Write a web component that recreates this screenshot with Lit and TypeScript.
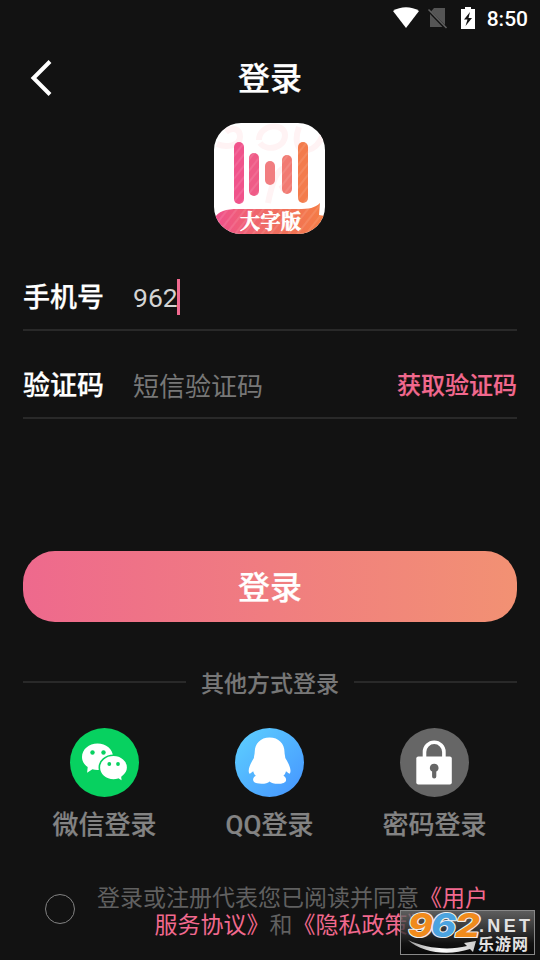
import { LitElement, html, css, svg } from "lit";
import { customElement, property } from "lit/decorators.js";

const wechat = svg`
  <circle cx="34.5" cy="34.5" r="34.5" fill="#07d160"/>
  <path fill="#fff" d="M27.500 15.500c-8.600 0-15.500 5.900-15.500 13.400 0 4.200 2.200 7.700 5.700 10.100l-.6 5.700 5.300-3.400c1.600.5 3.300.8 5.100.8 8.600 0 15.500-5.900 15.500-13.300s-6.900-13.300-15.500-13.300z"/>
  <circle cx="22.500" cy="24.500" r="2.200" fill="#07d160"/><circle cx="33.500" cy="24.500" r="2.200" fill="#07d160"/>
  <path fill="#fff" stroke="#07d160" stroke-width="1.600" d="M43.500 27.300c-8 0-14.200 5.500-14.200 12.300s6.200 12.400 14.200 12.400c1.700 0 3.300-.3 4.800-.8l4.300 2.700-.6-4.800c3.300-2.300 5.700-5.600 5.700-9.500 0-6.800-6.300-12.300-14.200-12.300z"/>
  <circle cx="39.300" cy="36" r="1.900" fill="#07d160"/><circle cx="48" cy="36" r="1.900" fill="#07d160"/>`;

const qq = svg`
  <defs><linearGradient id="q" x1="0.100" y1="0.100" x2="0.900" y2="0.900"><stop stop-color="#5bcbff"/><stop offset="1" stop-color="#489aff"/></linearGradient></defs>
  <circle cx="34.500" cy="34.500" r="34.500" fill="url(#q)"/>
  <path fill="#fff" d="M34.500 9.500c-9 0-14.800 6.300-14.800 14.500 0 2-.6 3.500-.8 6-2.800 4.500-5 9-5.200 12.500 0 3 .9 3.700 1.900 2.700l2.600-1.900c.6 2.500 1.400 3.400 2.600 4.500-1.800.9-2.700 2.300-2.700 3.900 0 3 3.800 4.100 8.400 4.100 3.600 0 6.700-1.100 8.100-2.400 1.500 1.300 4.600 2.400 8.200 2.400 4.600 0 8.300-1.100 8.300-4.100 0-1.600-.9-3-2.700-3.900 1.200-1.100 2-2 2.600-4.500l2.600 1.900c1 1 1.900.3 1.900-2.700-.2-3.500-2.400-8-5.200-12.500-.2-2.500-.8-4-.8-6 0-8.200-5.800-14.500-15-14.500z"/>`;

const lock = svg`
  <circle cx="34.500" cy="34.500" r="34.500" fill="#666"/>
  <path d="M24.500 30v-6a9.700 9.700 0 0 1 19.400 0V30" fill="none" stroke="#fff" stroke-width="3.600"/>
  <rect x="16.300" y="28.500" width="35.500" height="28" rx="2" fill="#fff"/>
  <path fill="#666" d="M34.200 35.700a4.200 4.200 0 0 0-2.100 7.900V48.500a2.100 2.100 0 0 0 4.200 0v-4.900a4.200 4.200 0 0 0-2.100-7.900z"/>`;

@customElement("login-method")
export class LoginMethod extends LitElement {
  @property() label = "";
  @property({ attribute: false }) icon: unknown;
  static styles = css`
    :host { display: flex; flex-direction: column; align-items: center; width: 165px; }
    svg { display: block; width: 69px; height: 69px; }
    .label { margin-top: 10px; font-size: 26px; line-height: 36px; font-weight: 500; color: #838383; white-space: nowrap; -webkit-text-stroke: .2px #838383; }
  `;
  render() {
    return html`<svg viewBox="0 0 69 69">${this.icon}</svg><span class="label">${this.label}</span>`;
  }
}

@customElement("app-root")
export class AppRoot extends LitElement {
  static styles = css`
    :host { display: block; position: relative; width: 540px; height: 960px; overflow: hidden; background: #121212; color: #fff; font-family: Roboto, "Noto Sans CJK SC", sans-serif; }
    * { box-sizing: border-box; }
    svg { display: block; }
    .status { height: 36px; padding-right: 12px; display: flex; justify-content: flex-end; align-items: center; }
    .battery { margin: 0 12px 0 13px; }
    .time { font-size: 21px; line-height: 36px; font-weight: 500; padding-top: 1px; }
    .header { height: 80px; display: grid; grid-template-columns: 100px 1fr 100px; align-items: center; }
    .back { margin: 1px 0 0 30px; }
    .title { text-align: center; font-size: 32px; line-height: 44px; font-weight: 500; padding-top: 5px; -webkit-text-stroke: .25px; }
    .logo { width: 111px; height: 111px; margin: 7px auto 0 214px; }
    .form { margin: 30px 23px 0; }
    .row { height: 67px; display: flex; align-items: center; border-bottom: 2px solid #292929; }
    .row + .row { margin-top: 21px; }
    .name { width: 110px; font-size: 27px; font-weight: 500; line-height: 36px; padding-top: 2px; -webkit-text-stroke: .25px; }
    .value { font-size: 26.500px; line-height: 36px; padding-top: 2px; color: #d4d4d4; }
    .hint { flex: 1; font-size: 26px; line-height: 36px; padding-top: 4px; color: #777; }
    .cursor { width: 3px; height: 36px; background: #f0698f; margin-left: -1px; }
    .code { font-size: 24px; line-height: 36px; font-weight: 500; padding-top: 3px; color: #f1698e; -webkit-text-stroke: .2px; }
    .submit { display: flex; align-items: center; justify-content: center; width: 494px; height: 71px; margin: 132px 23px 0; padding: 3px 0 0; border: 0; border-radius: 32px; background: linear-gradient(90deg, #ee698d, #f29173); color: #fff; font: 500 32px/44px Roboto, "Noto Sans CJK SC", sans-serif; -webkit-text-stroke: .25px; }
    .divider { margin: 43px 23px 0; height: 34px; display: flex; align-items: center; gap: 15px; color: #777; font-size: 23px; line-height: 34px; font-weight: 500; }
    .caption { padding-top: 5px; -webkit-text-stroke: .1px; }
    .rule { flex: 1; height: 2px; background: #292929; }
    .methods { margin-top: 29px; padding: 0 22px; display: flex; }
    .agreement { display: flex; margin: 42px 0 0 45px; }
    .check { width: 30px; height: 30px; margin-top: 9px; border: 1px solid #828282; border-radius: 50%; }
    .terms { width: 391px; margin-left: 22px; text-align: center; font-size: 23px; line-height: 27px; color: #606060; white-space: nowrap; }
    .link { color: #f1698e; }
    .badge { position: absolute; left: 400px; top: 910px; }
    .cjk { font-family: "Noto Sans CJK SC", sans-serif; }
    .edition { font-family: "Noto Serif CJK SC", "Noto Sans CJK SC", serif; font-weight: 700; stroke: #fff; stroke-width: .7px; }
    .num { font-family: Inter, "Liberation Sans", sans-serif; font-weight: 800; font-style: italic; }
    .net { font-family: "Liberation Sans", sans-serif; font-weight: 700; }
  `;

  render() {
    return html`
      <div class="status">
        <svg width="55" height="24" viewBox="0 0 55 24">
          <path fill="#fff" d="M0 5C7.500 0 18.500 0 26 5L13 22z"/>
          <path fill="#555" d="M41 2h11v17L38 5.500zM37 8 49.500 21H37z"/>
          <path d="M35.500 3.500 53.500 22" stroke="#606060" stroke-width="1.500"/>
        </svg>
        <svg class="battery" width="14" height="22" viewBox="0 0 14 22">
          <path fill="#fff" d="M4 0h6v2h4v20H0V2h4z"/>
          <path fill="#121212" d="M9 5 3 12.500h3.500L4.500 19 11 11H7.500z"/>
        </svg>
        <span class="time">8:50</span>
      </div>
      <div class="header">
        <svg class="back" width="24" height="38" viewBox="0 0 24 38"><path d="M20 3.500 3.500 20 20 36.500" fill="none" stroke="#fff" stroke-width="4"/></svg>
        <div class="title">登录</div>
      </div>
      <svg class="logo" viewBox="0 0 111 111">
        <defs>
          <linearGradient id="band"><stop stop-color="#f0508d"/><stop offset=".5" stop-color="#ef6c63"/><stop offset="1" stop-color="#f57d43"/></linearGradient>
          <pattern id="hatch" width="7" height="9" patternUnits="userSpaceOnUse" patternTransform="rotate(38)"><rect width="2" height="9" fill="#fff" opacity=".1"/></pattern>
          <clipPath id="tile"><rect width="111" height="111" rx="27"/></clipPath>
        </defs>
        <g clip-path="url(#tile)">
          <rect width="111" height="111" fill="#fff"/>
          <g fill="none" stroke="#fff3f4" stroke-width="6">
            <path d="M3 21c9 4 23 2 23-7S18 4 12 9M45 17c0-16 26-18 26-5S53 29 46 20M85 4c-5 14-2 25 9 23 7-1 12-8 15-15M54 80c3-15 7-30 14-34 9-3 7 15-2 20"/>
          </g>
          <rect x="20" y="19" width="10" height="62" rx="5" fill="#f0538b"/>
          <rect x="35" y="30" width="10" height="43" rx="5" fill="#ef5b87"/>
          <rect x="51" y="38" width="10" height="24" rx="5" fill="#f17d80"/>
          <rect x="68" y="32" width="10" height="39" rx="5" fill="#f17a72"/>
          <rect x="84" y="19" width="10" height="61" rx="5" fill="#f37c4c"/>
          <path fill="url(#hatch)" d="M20 24a5 5 0 0 1 10 0v52a5 5 0 0 1-10 0zM35 35a5 5 0 0 1 10 0v33a5 5 0 0 1-10 0zM68 37a5 5 0 0 1 10 0v29a5 5 0 0 1-10 0zM84 24a5 5 0 0 1 10 0v51a5 5 0 0 1-10 0z"/>
          <path fill="url(#band)" d="M0 96C4 88 12 86 24 86h60c11 0 17-1 22-6l-1 12 6 1v18H0z"/>
          <path fill="url(#hatch)" d="M0 96C4 88 12 86 24 86h60c11 0 17-1 22-6l-1 12 6 1v18H0z"/>
          <text class="edition" x="26" y="105.500" font-size="20" textLength="61" fill="#fff">大字版</text>
        </g>
      </svg>
      <div class="form">
        <div class="row"><span class="name">手机号</span><span class="value">962</span><span class="cursor"></span></div>
        <div class="row"><span class="name">验证码</span><span class="hint">短信验证码</span><span class="code">获取验证码</span></div>
      </div>
      <button class="submit">登录</button>
      <div class="divider"><span class="rule"></span><span class="caption">其他方式登录</span><span class="rule"></span></div>
      <div class="methods">
        <login-method label="微信登录" .icon=${wechat}></login-method>
        <login-method label="QQ登录" .icon=${qq}></login-method>
        <login-method label="密码登录" .icon=${lock}></login-method>
      </div>
      <div class="agreement">
        <span class="check"></span>
        <div class="terms">登录或注册代表您已阅读并同意<span class="link">《用户<br>服务协议》</span>和<span class="link">《隐私政策》</span></div>
      </div>
      <svg class="badge" width="135" height="45" viewBox="0 0 135 45">
        <defs>
          <linearGradient id="shade" x2="0" y2="1"><stop stop-color="#777" stop-opacity=".75"/><stop offset=".75" stop-color="#111" stop-opacity=".85"/><stop offset="1" stop-color="#080808"/></linearGradient>
          <linearGradient id="swoosh"><stop stop-color="#999"/><stop offset=".5" stop-color="#fff"/><stop offset="1" stop-color="#ccc"/></linearGradient>
        </defs>
        <rect x=".5" y=".5" width="134" height="44" fill="url(#shade)" stroke="#888"/>
        <path fill="url(#swoosh)" d="M8 30C25 38 48 41 67 36l-3-3 12-2-3 11-3-3C49 46 22 43 8 30z"/>
        <g class="num" font-size="32.500" stroke="#eee" stroke-width="2.200" paint-order="stroke" stroke-linejoin="round">
          <text x="8" y="27" textLength="25" lengthAdjust="spacingAndGlyphs" fill="#f08b1d">9</text>
          <text x="31" y="27" textLength="25" lengthAdjust="spacingAndGlyphs" fill="#4ba3df">6</text>
          <text x="55" y="27" textLength="25" lengthAdjust="spacingAndGlyphs" fill="#f08b1d">2</text>
        </g>
        <text class="net" x="79" y="22" font-size="18" textLength="51" fill="#e2e2e2">.NET</text>
        <text class="cjk" x="78" y="40" font-size="16" font-weight="700" textLength="50" fill="#e2e2e2">乐游网</text>
      </svg>
    `;
  }
}
